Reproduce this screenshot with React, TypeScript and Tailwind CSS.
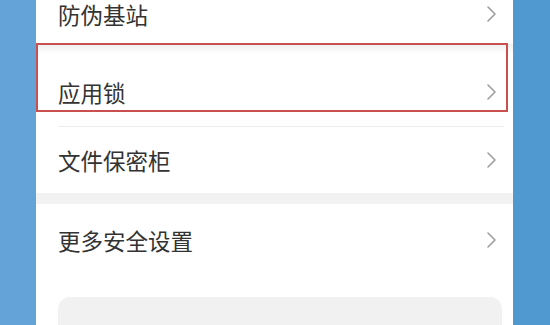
const font = { fontFamily: '"Noto Sans CJK SC", "Noto Sans", sans-serif' };

const Chevron = () => (
  <div className="flex h-[28px] items-center">
    <svg width="11" height="18" viewBox="0 0 11 18" fill="none">
      <path d="M2 2 L9 9 L2 16" stroke="#9d9d9d" strokeWidth="1.6" strokeLinecap="round" strokeLinejoin="round" />
    </svg>
  </div>
);

const Row = ({ label, className }: { label: string; className: string }) => (
  <div className={`flex justify-between pl-[22px] pr-[16px] ${className}`}>
    <span className="text-[22.5px] leading-[28px] text-[#333]">{label}</span>
    <Chevron />
  </div>
);

export default function App() {
  return (
    <div className="flex h-[325px] w-[550px] overflow-hidden" style={font}>
      <div className="w-[36px] bg-[#64a3d7]" />
      <div className="relative flex w-[477px] flex-col bg-white">
        <Row label="防伪基站" className="h-[44px] items-start pt-[-1px]" />
        <div className="h-[10px] bg-gradient-to-b from-[#efefef] to-white" />
        <Row label="应用锁" className="h-[72px] items-center pt-[4px]" />
        <div className="ml-[22px] mr-[9px] h-px bg-[#ececec]" />
        <Row label="文件保密柜" className="h-[66px] items-center" />
        <div className="h-[11px] bg-[#f2f2f2]" />
        <Row label="更多安全设置" className="h-[72px] items-center" />
        <div className="h-[21px]" />
        <div className="ml-[22px] mr-[11px] flex-1 rounded-t-xl bg-[#f1f1f1]" />
        <div className="absolute left-0 top-[43px] h-[69px] w-[472px] border-2 border-[#c9504e]" />
      </div>
      <div className="flex-1 bg-[#5099d0]" />
    </div>
  );
}
